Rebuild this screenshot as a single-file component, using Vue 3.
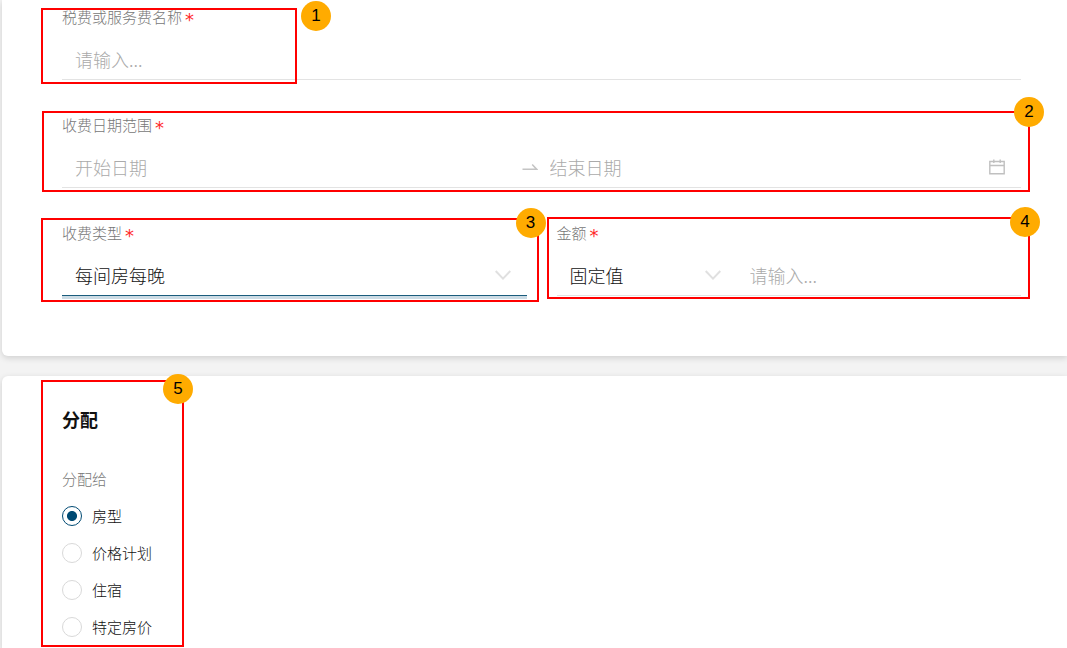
<script setup>
import { ref } from 'vue'

const name = ref('')
const startDate = ref('')
const endDate = ref('')
const chargeType = ref('room-night')
const amountType = ref('fixed')
const amount = ref('')
const target = ref('room')

const targets = [
  { value: 'room', label: '房型' },
  { value: 'plan', label: '价格计划' },
  { value: 'stay', label: '住宿' },
  { value: 'rate', label: '特定房价' },
]
</script>

<template>
  <main class="page">
    <form class="card fee" @submit.prevent>
      <div class="field">
        <label class="label" for="name">税费或服务费名称<span class="star">*</span></label>
        <div class="control">
          <input id="name" v-model="name" class="input" type="text" placeholder="请输入..." />
        </div>
        <div class="mark mark-name"><span class="badge">1</span></div>
      </div>

      <div class="field">
        <label class="label" for="start">收费日期范围<span class="star">*</span></label>
        <div class="control">
          <input id="start" v-model="startDate" class="input" type="text" placeholder="开始日期" />
          <svg class="arrow" viewBox="0 0 16 16" aria-hidden="true">
            <path d="M0.5 10.2H14.6L10.2 5.4" />
          </svg>
          <input v-model="endDate" class="input" type="text" placeholder="结束日期" aria-label="结束日期" />
          <svg class="calendar" viewBox="0 0 16 16" aria-hidden="true">
            <path d="M0.8 2.5H15.2V14.7H0.8Z" />
            <path d="M1 6.5H15M4.8 0.5V4M11.2 0.5V4" />
          </svg>
        </div>
        <div class="mark mark-dates"><span class="badge">2</span></div>
      </div>

      <div class="pair">
        <div class="field">
          <label class="label" for="type">收费类型<span class="star">*</span></label>
          <div class="control active">
            <div class="picker">
              <select id="type" v-model="chargeType" class="select">
                <option value="room-night">每间房每晚</option>
              </select>
              <svg class="chevron" viewBox="0 0 16 10" aria-hidden="true"><path d="M0.7 1L8 8.6L15.3 1" /></svg>
            </div>
          </div>
          <div class="mark mark-type"><span class="badge">3</span></div>
        </div>

        <div class="field">
          <label class="label" for="amount-type">金额<span class="star">*</span></label>
          <div class="amount">
            <div class="control">
              <div class="picker">
                <select id="amount-type" v-model="amountType" class="select">
                  <option value="fixed">固定值</option>
                </select>
                <svg class="chevron" viewBox="0 0 16 10" aria-hidden="true"><path d="M0.7 1L8 8.6L15.3 1" /></svg>
              </div>
            </div>
            <div class="control">
              <input v-model="amount" class="input" type="text" placeholder="请输入..." aria-label="金额" />
            </div>
          </div>
          <div class="mark mark-amount"><span class="badge">4</span></div>
        </div>
      </div>
    </form>

    <section class="card assign">
      <h2 class="title">分配</h2>
      <fieldset class="group">
        <legend class="label">分配给</legend>
        <label v-for="t in targets" :key="t.value" class="option">
          <input v-model="target" class="radio" type="radio" name="target" :value="t.value" />
          <span>{{ t.label }}</span>
        </label>
      </fieldset>
      <div class="mark mark-assign"><span class="badge">5</span></div>
    </section>
  </main>
</template>

<style>
body {
  margin: 0;
  background: #f3f3f3;
}
</style>

<style scoped>
.page {
  box-sizing: border-box;
  min-height: 100vh;
  display: flex;
  flex-direction: column;
  gap: 20px;
  padding-left: 2px;
  overflow: hidden;
  font-family: "Noto Sans CJK SC", sans-serif;
  font-weight: 300;
  font-size: 15px;
  color: #111;
}

.card {
  position: relative;
  background: #fff;
  box-shadow: 0 2px 6px rgba(0, 0, 0, 0.15);
}

.fee {
  display: flex;
  flex-direction: column;
  gap: 35px;
  padding: 7px 46px 60px 60px;
  border-radius: 0 0 0 6px;
}

.assign {
  flex: 1;
  padding: 27px 46px 0 60px;
  border-radius: 6px 0 0 0;
}

.pair {
  display: grid;
  grid-template-columns: 1fr 1fr;
  gap: 30px;
}

.field {
  position: relative;
}

.label {
  display: flex;
  height: 20px;
  padding: 0;
  line-height: 20px;
  color: #777;
}

.star {
  margin-left: 3px;
  font-family: "DejaVu Sans", sans-serif;
  font-weight: 400;
  font-size: 18px;
  line-height: 26px;
  color: #ff2a2a;
}

.control {
  box-sizing: border-box;
  height: 53px;
  min-width: 0;
  display: flex;
  align-items: center;
  padding: 12px 16px 0 13px;
  border-bottom: 1px solid #e3e3e3;
}

.control.active {
  border-bottom-color: #1a5c7c;
  box-shadow: 0 3px 0 #ccdbe4;
}

.input,
.select {
  appearance: none;
  box-sizing: border-box;
  flex: 1;
  width: 100%;
  min-width: 0;
  height: 36px;
  margin: 0;
  padding: 0;
  border: 0;
  border-radius: 0;
  outline: 0;
  background: transparent;
  font: inherit;
  font-size: 18px;
  color: #111;
}

.input::placeholder {
  color: #aaa;
  opacity: 1;
}

.picker {
  flex: 1;
  display: grid;
  align-items: center;
}

.picker > * {
  grid-area: 1 / 1;
}

.chevron {
  width: 16px;
  height: 10px;
  justify-self: end;
  pointer-events: none;
  fill: none;
  stroke: #e0e0e0;
  stroke-width: 2;
}

.arrow {
  width: 16px;
  height: 16px;
  margin: 0 12px 0 7px;
  fill: none;
  stroke: #c4c4c4;
  stroke-width: 1.5;
}

.calendar {
  width: 16px;
  height: 16px;
  fill: none;
  stroke: #c0c0c0;
  stroke-width: 1.4;
}

.amount {
  display: grid;
  grid-template-columns: 180px 1fr;
}

.title {
  margin: 0;
  font-size: 18px;
  line-height: 32px;
  font-weight: 700;
}

.group {
  margin: 34px 0 0;
  padding: 0;
  border: 0;
}

.group .label {
  margin-bottom: 8px;
}

.option {
  height: 37px;
  display: flex;
  align-items: center;
  gap: 10px;
}

.radio {
  appearance: none;
  box-sizing: border-box;
  width: 20px;
  height: 20px;
  margin: 0;
  border: 1px solid #d9d9d9;
  border-radius: 50%;
  background: #fff;
}

.radio:checked {
  border-color: #004a73;
  background: radial-gradient(circle, #004a73 0 4.6px, #fff 5.4px);
}

.mark {
  position: absolute;
  box-sizing: border-box;
  border: 2px solid #f00;
  pointer-events: none;
}

.mark-name {
  left: -21px;
  top: 1px;
  width: 256px;
  height: 76px;
}

.mark-dates {
  left: -20px;
  right: -9px;
  top: -4px;
  bottom: -4px;
}

.mark-type {
  left: -21px;
  right: -12px;
  top: -5px;
  bottom: -6px;
}

.mark-amount {
  left: -10px;
  right: -9px;
  top: -6px;
  bottom: -3px;
}

.mark-assign {
  left: 39px;
  top: 4px;
  width: 143px;
  height: 267px;
}

.badge {
  position: absolute;
  top: -12px;
  right: -12px;
  width: 30px;
  height: 30px;
  border-radius: 50%;
  background: #ffab00;
  font-family: "Liberation Sans", Arial, sans-serif;
  font-weight: 400;
  font-size: 17px;
  line-height: 30px;
  text-align: center;
  color: #000;
}

.mark-name .badge {
  top: -9px;
  right: -36px;
}

.mark-dates .badge {
  top: -16px;
  right: -16px;
}

.mark-type .badge {
  right: -9px;
}

.mark-assign .badge {
  top: -8px;
  right: -11px;
}
</style>
